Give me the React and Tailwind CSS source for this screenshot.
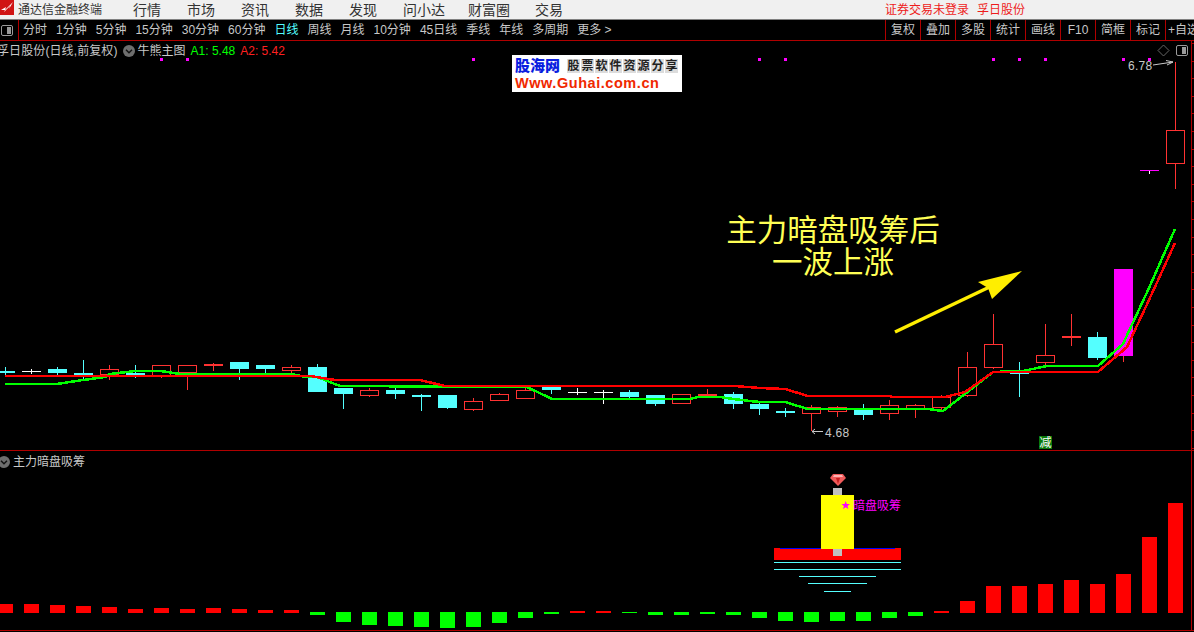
import React from 'react';

const menus = ['行情', '市场', '资讯', '数据', '发现'];
const periods = ['分时', '1分钟', '5分钟', '15分钟', '30分钟', '60分钟', '日线', '周线', '月线', '10分钟', '45日线', '季线', '年线', '多周期', '更多 >'];
const tools = ['复权', '叠加', '多股', '统计', '画线', 'F10', '简框', '标记', '+自选'];

// [center x, wick top, wick bottom, body top, body bottom, kind]
// kind: c = cyan solid, r = red hollow, f = red thin solid, w = white cross, x = cyan cross
const candles = [
  [5, 367, 376, 371, 373, 'c'], [31, 369, 374, 371, 372, 'w'], [57, 367, 375, 369, 373, 'c'],
  [83, 360, 380, 373, 375, 'c'], [109, 365, 380, 369, 374, 'r'], [135, 365, 378, 373, 375, 'c'],
  [161, 365, 378, 365, 375, 'r'], [187, 365, 390, 365, 372, 'r'], [213, 363, 371, 364, 366, 'f'],
  [239, 362, 380, 362, 369, 'c'], [265, 365, 374, 365, 369, 'c'], [291, 365, 374, 367, 370, 'r'],
  [317, 364, 392, 367, 392, 'c'], [343, 388, 409, 388, 394, 'c'], [369, 388, 397, 390, 395, 'r'],
  [395, 387, 399, 390, 394, 'c'], [421, 394, 411, 395, 397, 'c'], [447, 395, 409, 395, 408, 'c'],
  [473, 398, 411, 401, 409, 'r'], [499, 393, 400, 394, 400, 'r'], [525, 388, 398, 390, 398, 'r'],
  [551, 386, 394, 387, 390, 'c'], [577, 388, 395, 392, 393, 'w'], [603, 390, 404, 392, 393, 'w'],
  [629, 390, 398, 392, 397, 'c'], [655, 395, 406, 395, 404, 'c'], [681, 394, 404, 394, 403, 'r'],
  [707, 389, 396, 394, 396, 'f'], [733, 392, 409, 394, 404, 'c'], [759, 401, 415, 404, 409, 'c'],
  [785, 408, 417, 411, 413, 'c'], [811, 405, 431, 407, 413, 'r'], [837, 406, 417, 407, 411, 'r'],
  [863, 404, 420, 409, 415, 'c'], [889, 400, 420, 405, 413, 'r'], [915, 404, 418, 405, 409, 'r'],
  [941, 395, 410, 397, 407, 'r'], [967, 352, 397, 367, 395, 'r'], [993, 314, 369, 344, 367, 'r'],
  [1019, 362, 397, 373, 374, 'x'], [1045, 324, 365, 355, 362, 'r'], [1071, 314, 346, 336, 338, 'f'],
  [1097, 332, 360, 337, 358, 'c'], [1175, 62, 189, 130, 163, 'r'],
];

const dots = [160, 186, 472, 758, 784, 992, 1018, 1044, 1122, 1148];

const redLine = '5,376 310,376 335,380 420,380 445,386 735,386 760,388 785,389 808,396 890,396 892,397 945,397 965,392 993,372 1098,372 1127,347 1149,300 1175,243';
const greenLine = '5,384 57,384 83,380 105,377 110,374 135,371 161,371 180,374 292,374 305,377 317,377 340,386 527,387 552,399 690,399 698,397 720,397 733,399 750,401 760,402 785,402 808,409 928,409 943,411 965,394 993,372 1023,371 1047,366 1098,366 1123,344 1149,288 1175,229';

// volume style bars: [center x, edge y], red above the zero line and green below it
const bars = [
  [5, 604], [31, 604], [57, 605], [83, 606], [109, 607], [135, 609], [161, 608], [187, 609], [213, 608], [239, 609], [265, 610], [291, 610],
  [317, 615], [343, 622], [369, 625], [395, 626], [421, 627], [447, 628], [473, 627], [499, 623], [525, 618], [551, 614],
  [577, 611], [603, 611], [629, 613], [655, 615], [681, 615], [707, 614], [733, 615], [759, 618], [785, 621], [811, 622], [837, 621], [863, 621], [889, 618], [915, 616],
  [941, 611], [967, 601], [993, 586], [1019, 586], [1045, 584], [1071, 580], [1097, 584], [1123, 574], [1149, 537], [1175, 503],
];

const ticks = Array.from({ length: 24 }, (_, i) => 43 + i * 17.6);

const Candle = ({ c }) => {
  const [x, top, bottom, bodyTop, bodyBottom, kind] = c;
  const color = kind === 'c' || kind === 'x' ? '#54ffff' : kind === 'w' ? '#ffffff' : '#ff3232';
  return (
    <g>
      <line x1={x + 0.5} x2={x + 0.5} y1={top} y2={bottom} stroke={color} />
      {kind === 'r' && <rect x={x - 8.5} y={bodyTop + 0.5} width={18} height={bodyBottom - bodyTop} fill="#000" stroke={color} />}
      {(kind === 'c' || kind === 'f') && <rect x={x - 9} y={bodyTop} width={19} height={bodyBottom - bodyTop} fill={color} />}
      {(kind === 'w' || kind === 'x') && <rect x={x - 9} y={bodyTop} width={19} height={1} fill={color} />}
    </g>
  );
};

const PanelIcon = () => (
  <div className="flex h-[11px] w-[12px] justify-end rounded-[2px] border border-[#9a9a9a] bg-black p-[1px]">
    <div className="h-full w-[4px] bg-[#9a9a9a]" />
  </div>
);

const Chevron = ({ className }) => (
  <svg width="12" height="12" viewBox="0 0 12 12" className={className}>
    <circle cx="6" cy="6" r="6" fill="#6e6e6e" />
    <path d="M3 4.8 6 7.8 9 4.8" fill="none" stroke="#111" strokeWidth="1.4" />
  </svg>
);

const MainChart = () => (
  <svg width="1194" height="409" viewBox="0 41 1194 409" className="block" shapeRendering="crispEdges">
    {dots.map(x => <rect key={x} x={x} y={58} width={3} height={3} fill="#ff00ff" />)}
    {candles.map(c => <Candle key={c[0]} c={c} />)}
    <line x1="1123.5" x2="1123.5" y1="356" y2="362" stroke="#ff3232" />
    <rect x="1114" y="269" width="19" height="87" fill="#ff00ff" />
    <rect x="1140" y="170" width="19" height="1" fill="#ff00ff" />
    <rect x="1149" y="171" width="1" height="3" fill="#ffffff" />
    <polyline points={greenLine} fill="none" stroke="#00ff00" strokeWidth="2.5" />
    <polyline points={redLine} fill="none" stroke="#ff0000" strokeWidth="2.5" />
    <g shapeRendering="auto">
      <line x1="895" y1="332" x2="1000" y2="282" stroke="#ffee00" strokeWidth="3.5" />
      <polygon points="1022,271 978,282 988,288 992,299" fill="#ffee00" />
      <path d="M1153 65 1173 62M1166 60.5 1173 62 1167 65" fill="none" stroke="#c8c8c8" />
      <path d="M812 431.5H823M815 429 812 431.5 815 434" fill="none" stroke="#c8c8c8" />
      <path d="M1163.5 45 1169 50.5 1163.5 56 1158 50.5Z" fill="none" stroke="#666" />
    </g>
    {ticks.map(y => <rect key={y} x="1191" y={Math.round(y)} width="3" height="1" fill="#b00000" />)}
    <rect x="1191" y="41" width="1" height="409" fill="#b00000" />
  </svg>
);

const IndicatorChart = () => (
  <svg width="1194" height="179" viewBox="0 451 1194 179" className="block" shapeRendering="crispEdges">
    {bars.map(([x, y]) => (
      y < 612
        ? <rect key={x} x={x - 7} y={y} width={15} height={613 - y} fill="#ff0000" />
        : <rect key={x} x={x - 7} y={612} width={15} height={y - 612} fill="#00ff00" />
    ))}
    {/* the marker drawn by the indicator */}
    <rect x="774" y="548" width="127" height="12" fill="#ff0000" />
    <rect x="780" y="548" width="115" height="1" fill="#0000ff" />
    <rect x="833" y="488" width="9" height="68" fill="#c0c0c0" />
    <rect x="821" y="495" width="33" height="54" fill="#ffff00" />
    <rect x="774" y="562" width="127" height="1" fill="#54ffff" />
    <rect x="774" y="569" width="127" height="1" fill="#54ffff" />
    <rect x="799" y="576" width="77" height="1" fill="#54ffff" />
    <rect x="808" y="583" width="59" height="1" fill="#54ffff" />
    <rect x="824" y="591" width="27" height="1" fill="#54ffff" />
    <g shapeRendering="auto">
      <polygon points="833,474 843,474 846,478 838,486 830,478" fill="#f05a5a" />
      <polygon points="834,475 842,475 843,477 833,477" fill="#ffb0b0" />
      <polygon points="836,478 840,478 838,484" fill="#c81e1e" />
      <polygon points="845.7,501 846.8,504 850,504 847.5,506 848.4,509 845.7,507.2 843,509 843.9,506 841.4,504 844.6,504" fill="#ff00ff" />
    </g>
    <rect x="1191" y="451" width="1" height="179" fill="#b00000" />
  </svg>
);

const GuhaiLogo = () => (
  <div className="absolute left-[512px] top-[14px] flex h-[37px] w-[170px] flex-col bg-white px-[3px] pt-[2px]">
    <div className="flex h-[18px] items-center">
      <span className="w-[52px] text-[15px] leading-[18px] font-black text-[#0a1ee0]">股海网</span>
      <div className="flex gap-[1px]">
        {'股票软件资源分享'.split('').map(ch => (
          <span key={ch} className="flex h-[14px] w-[13px] items-center justify-center bg-[#dcdcdc] text-[12px] leading-none font-bold text-[#222]">{ch}</span>
        ))}
      </div>
    </div>
    <span className="font-['Liberation_Sans',sans-serif] text-[14.5px] leading-[16px] font-bold tracking-[0.55px] whitespace-nowrap text-[#f02800]">Www.Guhai.com.cn</span>
  </div>
);

export default function App() {
  return (
    <div className="flex h-[632px] w-[1194px] flex-col overflow-hidden bg-black font-['Liberation_Sans','Noto_Sans_CJK_SC',sans-serif] text-[12px] text-[#c8c8c8]">
      {/* title bar */}
      <div className="flex h-[20px] shrink-0 items-center border-b border-[#808080] bg-[#f0f0f0] text-[#333]">
        <svg width="14" height="15" viewBox="0 0 14 15" className="mb-[4px] shrink-0">
          <rect width="14" height="15" fill="#d01414" />
          <path d="M1 10 6 7 5 10 13 2 9 9 10 6 4 12 5 10Z" fill="#fff" />
        </svg>
        <span className="ml-[4px] w-[115px] leading-none">通达信金融终端</span>
        <div className="flex items-center gap-[26px] text-[14px] leading-none">
          {menus.map(m => <span key={m}>{m}</span>)}
          <span>问小达</span>
          <span className="-ml-[3px]">财富圈</span>
          <span className="-ml-[1px]">交易</span>
        </div>
        <div className="mr-[169px] ml-auto flex gap-[8px] leading-none text-[#ee1c1c]">
          <span>证券交易未登录</span>
          <span>孚日股份</span>
        </div>
      </div>

      {/* period toolbar */}
      <div className="flex h-[21px] shrink-0 items-stretch border-b border-[#b00000]">
        <div className="flex w-[19px] shrink-0 items-center border-r border-[#b00000] pl-[1px]">
          <PanelIcon />
        </div>
        <div className="ml-[4px] flex items-center gap-[9px] whitespace-nowrap">
          {periods.map(p => <span key={p} className={p === '日线' ? 'text-[#54ffff]' : ''}>{p}</span>)}
        </div>
        <div className="ml-auto flex shrink-0 -mr-[7px] border-l border-[#b00000]">
          {tools.map((t, i) => (
            <span key={t} className={`flex w-[35px] items-center justify-center whitespace-nowrap ${i < tools.length - 1 ? 'border-r border-[#b00000]' : ''}`}>{t}</span>
          ))}
        </div>
      </div>

      {/* main chart */}
      <div className="relative h-[410px] shrink-0 border-b border-[#b00000]">
        <MainChart />
        <div className="absolute top-[1px] -left-[3px] flex items-center whitespace-nowrap">
          <span className="tracking-[0.1px]">孚日股份(日线,前复权)</span>
          <Chevron className="ml-[5px]" />
          <span className="ml-[3px]">牛熊主图</span>
          <span className="ml-[5px] text-[#00ff00]">A1: 5.48</span>
          <span className="ml-[5px] text-[#ff2020]">A2: 5.42</span>
        </div>
        <GuhaiLogo />
        <div className="absolute top-[4px] left-[1176px]">
          <PanelIcon />
        </div>
        <span className="absolute top-[18px] left-[1128px] leading-[14px] tracking-[0.3px]">6.78</span>
        <span className="absolute top-[385px] left-[825px] leading-[14px] tracking-[0.3px]">4.68</span>
        <div className="absolute top-[171px] left-[716px] w-[234px] text-center font-['Noto_Sans_CJK_SC',sans-serif] text-[30.5px] leading-[32px] whitespace-nowrap text-[#ffff55]">
          <div>主力暗盘吸筹后</div>
          <div>一波上涨</div>
        </div>
        <span className="absolute top-[395px] left-[1039px] flex h-[13px] w-[13px] items-center justify-center bg-[#0a7a0a] text-[12px] leading-none text-white">减</span>
      </div>

      {/* indicator chart */}
      <div className="relative h-[180px] shrink-0 border-b border-[#b00000]">
        <IndicatorChart />
        <div className="absolute top-[2px] -left-[2px] flex items-center gap-[3px]">
          <Chevron />
          <span>主力暗盘吸筹</span>
        </div>
        <span className="absolute top-[47px] left-[853px] leading-[16px] text-[#ff00ff]">暗盘吸筹</span>
      </div>
    </div>
  );
}
